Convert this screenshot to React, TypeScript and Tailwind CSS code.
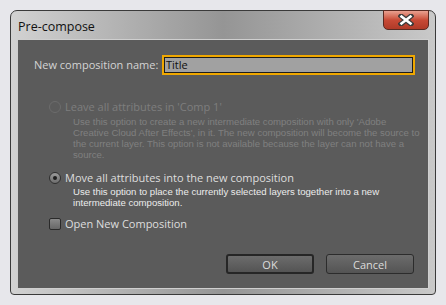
import React from 'react';

const ui = { fontFamily: '"Open Sans", "Noto Sans", sans-serif' };
const small = { fontFamily: '"Liberation Sans", Arial, sans-serif' };

function Radio({ checked, disabled }: { checked?: boolean; disabled?: boolean }) {
  return (
    <span
      className={`flex h-[12px] w-[12px] shrink-0 items-center justify-center rounded-full border ${
        disabled
          ? 'border-[#6c6c6c] bg-[#5b5b5b]'
          : 'border-[#2f2f2f] bg-gradient-to-b from-[#9a9a9a] to-[#6e6e6e]'
      }`}
    >
      {checked && <span className="h-[4px] w-[4px] rounded-full bg-[#1e1e1e]" />}
    </span>
  );
}

export default function App() {
  return (
    <div className="h-[305px] w-[446px] bg-[#e7e7eb] pl-[10px] pt-[10px]">
      <div className="relative flex h-[285px] w-[426px] flex-col rounded-t-[7px] rounded-b-[4px] border border-[#3a3a3a] bg-gradient-to-r from-[#d2d2d2] via-[#959595] to-[#c9c9c9] px-[6px] pb-[5px] pt-[28px]">
        <div className="absolute left-[7px] top-[7px] text-[12.5px] text-[#111]" style={ui}>
          Pre-compose
        </div>

        <div className="absolute right-[6px] top-[-1px] flex h-[20px] w-[46px] items-center justify-center rounded-b-[5px] border border-[#5a2a22] bg-gradient-to-b from-[#e8a090] via-[#c84a36] to-[#b03a28]">
          <svg width="16" height="12" viewBox="0 0 16 12">
            <path d="M3 2 L13 10 M13 2 L3 10" stroke="#3a3a3a" strokeWidth="5" strokeLinecap="square" />
            <path d="M3.5 2.5 L12.5 9.5 M12.5 2.5 L3.5 9.5" stroke="#ffffff" strokeWidth="2.6" strokeLinecap="square" />
          </svg>
        </div>

        <div className="flex flex-1 flex-col border border-[#cfcfcf] bg-[#5b5b5b]">
          <div className="mt-[15px] flex items-center pl-[16px]">
            <span className="w-[128px] whitespace-nowrap text-[11px] text-[#d4d4d4]" style={ui}>
              New composition name:
            </span>
            <div className="flex h-[20px] w-[253px] border-2 border-[#f0a800]">
              <div className="flex flex-1 items-center border border-[#1d1d1d] bg-[#a1a1a1] px-[1px]">
                <span className="text-[11px] text-[#101010]" style={ui}>
                  Title
                </span>
              </div>
            </div>
          </div>

          <div className="mt-[24px] flex flex-col pl-[31px]">
            <div className="flex items-center gap-[4px]">
              <Radio disabled />
              <span className="text-[11px] text-[#7e7e7e]" style={ui}>
                Leave all attributes in 'Comp 1'
              </span>
            </div>
            <p
              className="ml-[24px] whitespace-nowrap text-[9.6px] leading-[11.3px] text-[#808080]"
              style={small}
            >
              Use this option to create a new intermediate composition with only 'Adobe
              <br />
              Creative Cloud After Effects', in it. The new composition will become the source to
              <br />
              the current layer. This option is not available because the layer can not have a
              <br />
              source.
            </p>

            <div className="mt-[9px] flex items-center gap-[4px]">
              <Radio checked />
              <span className="text-[11px] text-[#dedede]" style={ui}>
                Move all attributes into the new composition
              </span>
            </div>
            <p
              className="ml-[24px] whitespace-nowrap text-[9.6px] leading-[11.3px] text-[#ececec]"
              style={small}
            >
              Use this option to place the currently selected layers together into a new
              <br />
              intermediate composition.
            </p>

            <div className="mt-[7px] flex items-center gap-[4px]">
              <span className="h-[12px] w-[12px] rounded-[2px] border border-[#2a2a2a] bg-gradient-to-b from-[#8a8a8a] to-[#676767]" />
              <span className="text-[11px] text-[#dedede]" style={ui}>
                Open New Composition
              </span>
            </div>
          </div>

          <div className="mt-auto mb-[14px] flex justify-end gap-[12px] pr-[14px]">
            <button
              type="button"
              className="h-[20px] w-[88px] rounded-[3px] border-2 border-[#262626] bg-gradient-to-b from-[#6c6c6c] to-[#545454] text-[11px] leading-none text-[#dcdcdc]"
              style={ui}
            >
              OK
            </button>
            <button
              type="button"
              className="h-[20px] w-[88px] rounded-[3px] border border-[#2c2c2c] bg-gradient-to-b from-[#6c6c6c] to-[#545454] text-[11px] leading-none text-[#dcdcdc]"
              style={ui}
            >
              Cancel
            </button>
          </div>
        </div>
      </div>
    </div>
  );
}
